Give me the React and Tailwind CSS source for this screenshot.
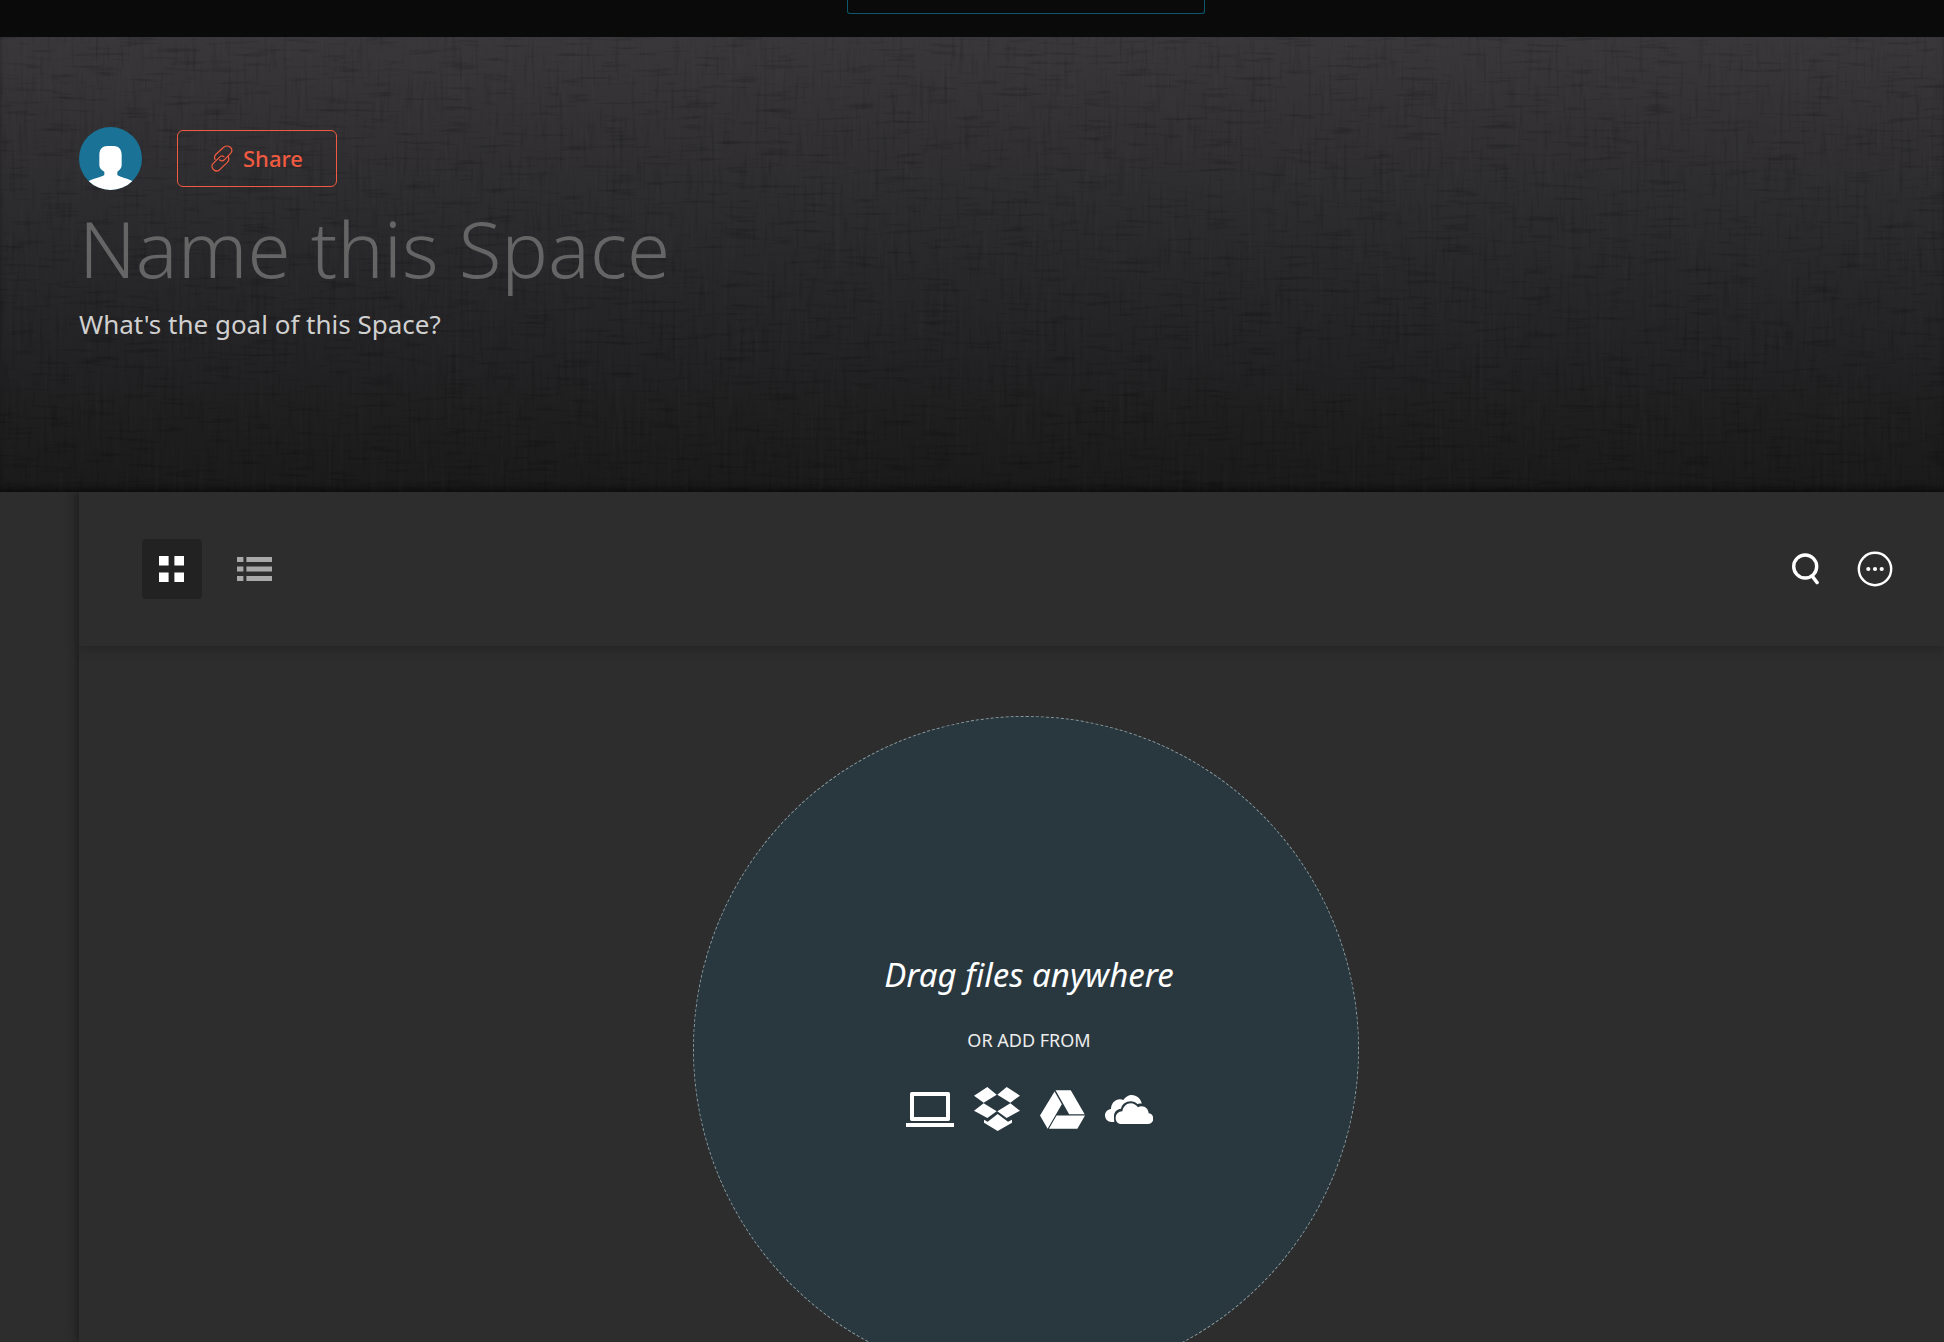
import { useState } from 'react';

function LinenTexture() {
  return (
    <svg className="absolute inset-0 h-full w-full pointer-events-none" aria-hidden="true">
      <filter id="weft" x="0" y="0" width="100%" height="100%">
        <feTurbulence type="fractalNoise" baseFrequency="0.025 0.25" numOctaves="3" seed="4" />
        <feColorMatrix values="0 0 0 0 0  0 0 0 0 0  0 0 0 0 0  1.6 0 0 0 -0.9" />
      </filter>
      <filter id="warp" x="0" y="0" width="100%" height="100%">
        <feTurbulence type="fractalNoise" baseFrequency="0.25 0.025" numOctaves="3" seed="9" />
        <feColorMatrix values="0 0 0 0 0  0 0 0 0 0  0 0 0 0 0  1.4 0 0 0 -0.78" />
      </filter>
      <filter id="threads" x="0" y="0" width="100%" height="100%">
        <feTurbulence type="fractalNoise" baseFrequency="0.25 0.012" numOctaves="2" seed="21" />
        <feColorMatrix values="0 0 0 0 1  0 0 0 0 1  0 0 0 0 1  0.5 0 0 0 -0.25" />
      </filter>
      <rect width="100%" height="100%" filter="url(#weft)" opacity="0.35" />
      <rect width="100%" height="100%" filter="url(#warp)" opacity="0.25" />
      <rect width="100%" height="100%" filter="url(#threads)" opacity="0.08" />
    </svg>
  );
}

function Avatar() {
  return (
    <svg viewBox="0 0 189 189" className="h-[63px] w-[63px]" role="img" aria-label="Member">
      <clipPath id="avatar-clip">
        <circle cx="94.5" cy="94.5" r="94.5" />
      </clipPath>
      <g clipPath="url(#avatar-clip)">
        <rect width="189" height="189" fill="#1a7397" />
        <path
          fill="#fff"
          d="M61 84c0-18 10-27 24-27h19c14 0 24 9 24 27v30c0 8-5 15-13 20v9c2 6 28 9 45 19l10 27H19l10-27c17-10 45-13 47-19v-9c-10-5-15-12-15-20z"
        />
      </g>
    </svg>
  );
}

function LinkIcon() {
  return (
    <svg viewBox="37 19 66 81" className="h-[27px] w-[22px]" fill="none" stroke="currentColor" strokeWidth="3.8" strokeLinecap="round" strokeLinejoin="round" aria-hidden="true">
      <path d="M49 62c-3-6-2-10 3-15l23-21c5-5 14-5 20 0 6 5 6 12 1 18L78 62c-4 5-10 6-15 2" />
      <path d="M88 53c4 7 3 13-2 18L64 92c-5 6-13 6-19 1-6-5-7-12-2-18l19-19c4-4 10-5 14-2" />
    </svg>
  );
}

function GridIcon() {
  return (
    <svg viewBox="0 0 26 26" className="h-[26px] w-[26px]" fill="currentColor" aria-hidden="true">
      <path d="M0 0h9.6v9.6H0zM15.4 0H25v9.6h-9.6zM0 16.4h9.6V26H0zM15.4 16.4H25V26h-9.6z" />
    </svg>
  );
}

function ListIcon() {
  return (
    <svg viewBox="0 0 35 24" className="h-[24px] w-[35px]" fill="currentColor" aria-hidden="true">
      <path d="M0 0h6.4v5H0zM9.4 0H35v5H9.4zM0 9.4h6.4v5.2H0zM9.4 9.4H35v5.2H9.4zM0 19h6.4v5H0zM9.4 19H35v5H9.4z" />
    </svg>
  );
}

function SearchIcon() {
  return (
    <svg viewBox="0 0 28 32" className="h-[32px] w-[28px]" fill="none" stroke="currentColor" aria-hidden="true">
      <circle cx="13.2" cy="13.5" r="11.5" strokeWidth="3.4" />
      <path d="M20.5 23.5l4.5 6" strokeWidth="3.6" strokeLinecap="round" />
    </svg>
  );
}

function MoreIcon() {
  return (
    <svg viewBox="0 0 36 36" className="h-[36px] w-[36px]" aria-hidden="true">
      <circle cx="18" cy="18" r="16.2" fill="none" stroke="currentColor" strokeWidth="2.4" />
      <g fill="currentColor">
        <circle cx="11.3" cy="18" r="2.1" />
        <circle cx="18" cy="18" r="2.1" />
        <circle cx="24.7" cy="18" r="2.1" />
      </g>
    </svg>
  );
}

function LaptopIcon() {
  return (
    <svg viewBox="0 0 144 132" className="h-[44px] w-[48px]" fill="currentColor" aria-hidden="true">
      <path fillRule="evenodd" d="M17 15h110q5 0 5 5v77q0 5-5 5H17q-5 0-5-5V20q0-5 5-5zM24 27v63h96V27z" />
      <path d="M0 108h144v12H0z" />
    </svg>
  );
}

function DropboxIcon() {
  return (
    <svg viewBox="0 0 138 132" className="h-[44px] w-[46px]" fill="currentColor" aria-hidden="true">
      <path d="M40 0l28 23-39 24L0 26zM98 0l40 26-29 21-39-24zM29 49l39 24-28 20L0 71zM109 49l29 22-40 22-28-20z" />
      <path d="M71 81l31 23 12-6v9l-43 25-41-25v-9l11 6z" />
    </svg>
  );
}

function DriveIcon() {
  return (
    <svg viewBox="0 0 136 132" className="h-[44px] w-[45px]" fill="currentColor" aria-hidden="true">
      <path d="M44 13l22 39-43 74L0 86zM47 9h46l42 73H88zM50 86h86l-23 40H27z" />
    </svg>
  );
}

function OneDriveIcon() {
  return (
    <svg viewBox="0 0 144 132" className="h-[44px] w-[48px]" fill="currentColor" aria-hidden="true">
      <path d="M28 105H20C8 105 0 96 0 85c0-10 8-18 18-19 0-16 12-29 27-29 4 0 7 1 10 2 6-9 15-15 25-15 15 0 28 11 30 26-5-1-9-1-13 1-5-5-12-8-20-8-14 0-26 9-29 22-12 1-21 10-21 22 0 7 0 13 1 18z" />
      <path d="M49 111c-11 0-17-8-17-18 0-11 8-20 20-20 2-14 13-24 25-24 9 0 17 5 22 12 3-2 7-3 11-3 12 0 20 9 21 21 8 0 14 8 14 16 0 9-7 16-16 16z" />
    </svg>
  );
}

const sources = [
  { name: 'Computer', Icon: LaptopIcon },
  { name: 'Dropbox', Icon: DropboxIcon },
  { name: 'Google Drive', Icon: DriveIcon },
  { name: 'OneDrive', Icon: OneDriveIcon },
];

export default function App() {
  const [view, setView] = useState('grid');
  const [name, setName] = useState('');
  const [goal, setGoal] = useState('');

  return (
    <div className="flex h-screen flex-col overflow-hidden bg-[#2d2d2d] font-['Noto_Sans','Open_Sans',sans-serif] text-white">
      <div className="flex h-[37px] shrink-0 items-start justify-center bg-[#0a0a0a] pl-[108px]">
        <div className="h-[14px] w-[358px] rounded-b-[3px] border border-t-0 border-[#0d566b]" />
      </div>

      <header className="relative shrink-0 bg-linear-to-b from-[#39373a] via-[#28272a] to-[#1a1a1a] shadow-[inset_0_-6px_6px_-3px_#0c0c0c]">
        <LinenTexture />
        <div className="relative flex flex-col px-[79px] pt-[90px] pb-[148px]">
          <div className="flex items-center gap-[35px]">
            <Avatar />
            <button
              type="button"
              className="flex h-[57px] w-[160px] items-center justify-center gap-[10px] rounded-[6px] border border-[#f05a40] text-[22px] font-medium text-[#f05a40]"
            >
              <LinkIcon />
              Share
            </button>
          </div>
          <input
            aria-label="Space name"
            value={name}
            onChange={(e) => setName(e.target.value)}
            placeholder="Name this Space"
            className="mt-[8px] h-[100px] w-full bg-transparent text-[78px] font-light outline-none placeholder:text-[#656565]"
          />
          <input
            aria-label="Space goal"
            value={goal}
            onChange={(e) => setGoal(e.target.value)}
            placeholder="What's the goal of this Space?"
            className="mt-[6px] h-[40px] w-full bg-transparent text-[26px] outline-none placeholder:text-[#d0d0d0]"
          />
        </div>
      </header>

      <div className="flex min-h-0 grow">
        <aside className="w-[79px] shrink-0" />
        <main className="flex min-w-0 grow flex-col shadow-[-2px_0_8px_#1c1c1c]">
          <div className="flex h-[154px] shrink-0 items-center justify-between pr-[51px] pl-[63px] shadow-[0_3px_8px_#252525]">
            <div className="flex items-center gap-[20px]">
              <button
                type="button"
                aria-label="Grid view"
                aria-pressed={view === 'grid'}
                onClick={() => setView('grid')}
                className={`flex h-[60px] w-[60px] items-center justify-center rounded-[4px] ${view === 'grid' ? 'bg-[#222222] text-white' : 'text-[#a9a9a9]'}`}
              >
                <GridIcon />
              </button>
              <button
                type="button"
                aria-label="List view"
                aria-pressed={view === 'list'}
                onClick={() => setView('list')}
                className={`flex h-[60px] w-[65px] items-center justify-center rounded-[4px] ${view === 'list' ? 'bg-[#222222] text-white' : 'text-[#a9a9a9]'}`}
              >
                <ListIcon />
              </button>
            </div>
            <div className="flex items-center gap-[37px]">
              <button type="button" aria-label="Search">
                <SearchIcon />
              </button>
              <button type="button" aria-label="More options">
                <MoreIcon />
              </button>
            </div>
          </div>

          <div className="flex min-h-0 grow justify-center overflow-hidden pt-[70px] pl-[29px]">
            <section className="flex h-[666px] w-[666px] shrink-0 flex-col items-center rounded-full border border-dashed border-[#8b9a9e] bg-[#29383f] pt-[236px] pl-[6px]">
              <h2 className="text-[33px] leading-[44px] font-normal italic">Drag files anywhere</h2>
              <p className="mt-[31px] text-[18px] leading-[24px] text-[#ececec]">OR ADD FROM</p>
              <div className="mt-[35px] flex items-center gap-[20px]">
                {sources.map(({ name: label, Icon }) => (
                  <button key={label} type="button" aria-label={`Add from ${label}`}>
                    <Icon />
                  </button>
                ))}
              </div>
            </section>
          </div>
        </main>
      </div>
    </div>
  );
}
